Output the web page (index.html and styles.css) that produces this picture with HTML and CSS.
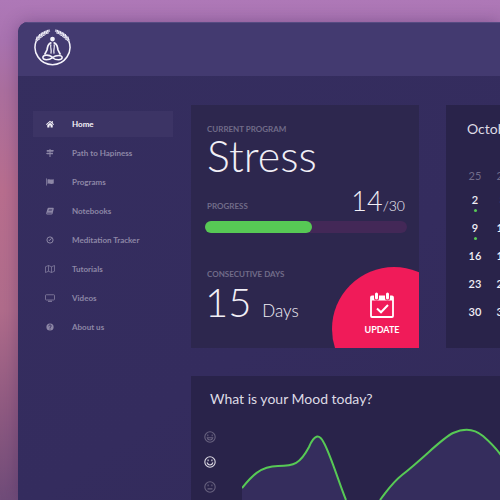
FILE: index.html
```html
<!DOCTYPE html>
<html lang="en">
<head>
<meta charset="utf-8">
<meta name="viewport" content="width=device-width, initial-scale=1">
<title>Home</title>
<link rel="stylesheet" href="styles.css">
</head>
<body>
<div class="app">
  <header class="topbar">
    <svg class="logo" viewBox="0 0 36 38" fill="none" stroke="#f4f2fa" aria-hidden="true">
      <path d="M2.200 11.500A17 17 0 1 0 33.800 11.500" stroke-width="1.500"/>
      <path d="M2 11.500C5 6 9 2.800 15.500 1.500M34 11.500C31 6 27 2.800 20.500 1.500" stroke-width="2.600" stroke="#b5b0cd"/>
      <path d="M2.300 10.500 3 7.500M4.500 8.800 5.500 5M6.700 7 8.200 3.500M9.300 5.400 10.800 2.200M12 4 13.500 1M33.700 10.500 33 7.500M31.500 8.800 30.500 5M29.300 7 27.800 3.500M26.700 5.400 25.200 2.200M24 4 22.500 1" stroke-width="1.100"/>
      <path d="M2.500 11.500 6 9.500M5 9 8.500 7.300M7.500 7 11 5.600M10.500 5 14.500 3.700M33.500 11.500 30 9.500M31 9 27.500 7.300M28.500 7 25 5.600M25.500 5 21.500 3.700" stroke-width="0.900"/>
      <circle cx="18" cy="9.800" r="2.300" fill="#f4f2fa" stroke="none"/>
      <path d="M17 13.300C13 14.300 13.500 17 12.600 20.500L10.300 25M19 13.300C23 14.300 22.500 17 23.400 20.500L25.700 25" stroke-width="1.700"/>
      <path d="M16.400 15C15.600 19 17.500 20 16.500 24M19.600 15C20.400 19 18.500 20 19.500 24" stroke-width="1.200"/>
      <path d="M18 27.300C13.500 24.300 8.500 25.300 8.600 27.800C8.800 30.600 14.500 30.600 18 27.800C21.500 25.200 27.200 25.200 27.400 27.800C27.500 30.600 21.500 30.800 18 28" stroke-width="1.500"/>
    </svg>
  </header>

  <div class="layout">
    <nav class="nav">
      <a class="nav-item active" href="#">
        <svg viewBox="0 0 16 16" fill="currentColor" aria-hidden="true"><path d="M8 1.500 0 8.500l1.200 1.300L8 4l6.800 5.800L16 8.500l-2.500-2.200V2h-2.200v2.400zM8 5.500 2.600 10v4.800h4.200V11h2.400v3.800h4.200V10z"/></svg>
        Home</a>
      <a class="nav-item" href="#">
        <svg viewBox="0 0 16 16" fill="currentColor" aria-hidden="true"><path d="M7 0h2v2h5l2 1.700-2 1.700H9v2h5v3.300H9V16H7v-5.300H2L0 9l2-1.600h5v-2H1.500V2H7z"/></svg>
        Path to Hapiness</a>
      <a class="nav-item" href="#">
        <svg viewBox="0 0 16 16" fill="currentColor" aria-hidden="true"><path d="M0 1h2v14H.5V2.500zM3 3c4-2 5 1.500 12.500-.5v8.500C9 13.500 7 9.500 3 11.800z"/></svg>
        Programs</a>
      <a class="nav-item" href="#">
        <svg viewBox="0 0 16 16" fill="currentColor" fill-rule="evenodd" aria-hidden="true"><path d="M5 1.500h9.500q1.500.5 1 2L13 13.500q-.5 1.500-2 1.500H2Q0 14.500.5 12L3 3.500Q3.500 1.500 5 1.500zM6 4.300l-.4 1.200h6.600l.4-1.200zM5.200 7l-.4 1.200h6.600l.4-1.200zM2.500 11.500l-.3 1.500h9l.4-1.500z"/></svg>
        Notebooks</a>
      <a class="nav-item" href="#">
        <svg viewBox="0 0 16 16" fill="none" stroke="currentColor" stroke-width="2" aria-hidden="true"><circle cx="8" cy="8" r="6.200"/><path d="M11 4.500 8 8.500H5.500"/></svg>
        Meditation Tracker</a>
      <a class="nav-item" href="#">
        <svg class="wide" viewBox="0 0 20 16" fill="none" stroke="currentColor" stroke-width="1.400" aria-hidden="true"><path d="M1 3.500 7 1l6 2.500L19 1v11.500L13 15l-6-2.500L1 15zM7 1v11.500M13 3.500V15"/></svg>
        Tutorials</a>
      <a class="nav-item" href="#">
        <svg class="wide" viewBox="0 0 20 16" fill="none" stroke="currentColor" stroke-width="1.500" aria-hidden="true"><rect x="1" y="1.500" width="18" height="10.500" rx="1.500"/><path d="M6 14.500h8" stroke-width="2"/></svg>
        Videos</a>
      <a class="nav-item" href="#">
        <svg viewBox="0 0 16 16" aria-hidden="true"><circle cx="8" cy="8" r="7.200" fill="currentColor"/><path d="M5.500 6.500C5.500 3 10.700 3.200 10.500 6.200 10.300 8 8 7.700 8 10M8 11v2" fill="none" stroke="#352d5e" stroke-width="2"/></svg>
        About us</a>
    </nav>

    <main class="panels">
      <section class="card program">
        <h2 class="label">CURRENT PROGRAM</h2>
        <p class="program-name">Stress</p>
        <div class="progress-head">
          <h2 class="label">PROGRESS</h2>
          <p class="count">14<span>/30</span></p>
        </div>
        <div class="bar" role="progressbar" aria-label="Progress" aria-valuemin="0" aria-valuemax="30" aria-valuenow="14"><div class="bar-fill"></div></div>
        <h2 class="label">CONSECUTIVE DAYS</h2>
        <p class="days">15 <span>Days</span></p>
        <button class="update" type="button">
          <svg viewBox="0 0 24 26" fill="none" stroke="#fff" aria-hidden="true">
            <rect x="1" y="4.500" width="22" height="20.500" rx="1" stroke-width="1.800"/>
            <path d="M1 4h22v4.500H1z" fill="#fff" stroke="none"/>
            <path d="M6.500 3v3M17.500 3v3" stroke="#f01b59" stroke-width="5" stroke-linecap="round"/>
            <path d="M6.500 2v4M17.500 2v4" stroke-width="3" stroke-linecap="round"/>
            <path d="m7 16.500 4 3.800 7-7.300" stroke-width="2"/>
          </svg>
          UPDATE
        </button>
      </section>

      <section class="card calendar">
        <h2 class="title">October</h2>
        <table>
          <tbody>
            <tr class="first"><td class="muted">25</td><td class="muted">26</td></tr>
            <tr><td class="marked">2</td><td>3</td></tr>
            <tr><td class="marked">9</td><td>10</td></tr>
            <tr><td>16</td><td>17</td></tr>
            <tr><td>23</td><td>24</td></tr>
            <tr><td>30</td><td>31</td></tr>
          </tbody>
        </table>
      </section>

      <section class="card mood">
        <h2 class="title">What is your Mood today?</h2>
        <div class="mood-body">
          <div class="faces">
            <button type="button" aria-label="Great"><svg viewBox="0 0 22 22"><circle cx="11" cy="11" r="9.500"/><path d="M7 6.500v3M15 6.500v3M6 12.500h10q-1 4-5 4t-5-4z"/></svg></button>
            <button type="button" aria-label="Good" class="selected"><svg viewBox="0 0 22 22"><circle cx="11" cy="11" r="9.500"/><path d="M7.500 6.500v3M14.500 6.500v3M5.500 12q1.500 4.500 5.500 4.500t5.500-4.500"/></svg></button>
            <button type="button" aria-label="Neutral"><svg viewBox="0 0 22 22"><circle cx="11" cy="11" r="9.500"/><path d="M7.500 6.500v3M14.500 6.500v3M6.500 14.500h9"/></svg></button>
          </div>
          <svg class="chart" viewBox="0 0 280 100" aria-hidden="true">
            <path class="area" d="M0 63C9 52 18 41 36 41C52 41 58 39 67 22C72 10 77 8 82 18C89 31 97 58 104 75V100H0zM138 75C148 62 150 58 160 50C184 31 199 14 211 8C224 2 234 5 241 11C249 18 257 26 262 35L280 65V100H138z"/>
            <path class="line" d="M0 63C9 52 18 41 36 41C52 41 58 39 67 22C72 10 77 8 82 18C89 31 97 58 104 75M138 75C148 62 150 58 160 50C184 31 199 14 211 8C224 2 234 5 241 11C249 18 257 26 262 35L280 65"/>
          </svg>
        </div>
      </section>
    </main>
  </div>
</div>
</body>
</html>
```
FILE: styles.css
```css
* { box-sizing: border-box; }

body {
  margin: 0;
  height: 100vh;
  overflow: hidden;
  display: flex;
  padding: 22px 0 0 18px;
  font-family: Lato, "Liberation Sans", sans-serif;
  color: #f1eff6;
  background: linear-gradient(180deg, #ae78b7 0%, #a973b0 8%, #ab6f9e 18%, #b86e8e 38%, #b06c8b 62%, #8f5a81 82%, #704c79 100%);
}

h2, p { margin: 0; }

.app {
  flex: 1;
  min-width: 0;
  overflow: hidden;
  border-top-left-radius: 10px;
  background: linear-gradient(145deg, #352e5f, #342c5e 60%, #322b59);
  box-shadow: 0 0 16px rgba(60, 35, 90, 0.35);
}

.topbar {
  height: 54px;
  padding: 6px 16px;
  background: #433a70;
  border-top: 1px solid #574b82;
}

.logo { display: block; width: 37px; height: 39px; }

.layout {
  display: grid;
  grid-template-columns: 140px minmax(0, 1fr);
  gap: 18px;
  padding: 29px 0 0 15px;
}

.nav {
  display: flex;
  flex-direction: column;
  gap: 3px;
  padding-top: 6px;
}

.nav-item {
  display: flex;
  align-items: center;
  height: 26px;
  padding-left: 12px;
  font-size: 8px;
  font-weight: 700;
  color: #8d87a6;
  text-decoration: none;
}

.nav-item svg { width: 8px; height: 8px; margin: 0 18px 0 1px; }
.nav-item svg.wide { width: 10px; margin: 0 17px 0 0; }
.nav-item.active { color: #f4f2f8; background: #3c3465; }

.panels {
  display: grid;
  grid-template-columns: 228px minmax(0, 1fr);
  gap: 28px 27px;
}

.card { background: #2d274e; overflow: hidden; }

.label {
  font-size: 8px;
  line-height: 10px;
  font-weight: 700;
  color: #716c89;
}

.title {
  font-size: 14px;
  line-height: 20px;
  font-weight: 400;
  color: #dedbe5;
}

.program {
  position: relative;
  height: 243px;
  padding: 19px 12px 0 14px;
}

.program .label { padding-left: 2px; }

.program-name {
  padding-left: 2px;
  font-size: 43px;
  line-height: 44px;
  font-weight: 300;
}

.progress-head {
  display: flex;
  justify-content: space-between;
  align-items: flex-end;
  padding: 9px 2px 0 0;
}

.progress-head .label { padding-bottom: 4px; }

.count { font-size: 27px; line-height: 28px; font-weight: 300; }
.count span { font-size: 14px; line-height: 14px; }

.bar {
  height: 12px;
  margin: 6px 0 36px;
  border-radius: 6px;
  background: #432857;
}

.bar-fill {
  width: 53%;
  height: 100%;
  border-radius: 6px;
  background: #57c955;
}

.days { font-size: 40px; line-height: 46px; font-weight: 300; }
.days span { font-size: 17px; line-height: 17px; }

.update {
  position: absolute;
  left: 141px;
  top: 162px;
  width: 124px;
  height: 124px;
  display: flex;
  flex-direction: column;
  align-items: center;
  gap: 6px;
  padding: 25px 24px 0 0;
  border: 0;
  border-radius: 50%;
  background: #f01b59;
  color: #fff;
  font: 700 9px/12px Lato, "Liberation Sans", sans-serif;
}

.update svg { width: 24px; height: 26px; }

.calendar { padding: 14px 0 0 21px; background: #29234a; }

.calendar table {
  width: 56px;
  margin: 27px 0 0 -6px;
  border-collapse: collapse;
  table-layout: fixed;
}

.calendar td {
  position: relative;
  width: 28px;
  height: 28px;
  padding: 0;
  font-size: 11px;
  font-weight: 600;
  text-align: center;
}

.calendar .first td { height: 19px; }
.calendar .muted { font-weight: 400; color: #716c89; }

.marked::after {
  content: "";
  position: absolute;
  left: 13px;
  bottom: 1px;
  width: 3px;
  height: 3px;
  border-radius: 50%;
  background: #57c955;
}

.mood {
  grid-column: 1 / -1;
  min-height: 243px;
  padding: 13px 0 0 13px;
  background: #29234a;
}

.mood .title { padding-left: 6px; }

.mood-body {
  display: grid;
  grid-template-columns: 12px minmax(0, 1fr);
  gap: 26px;
  padding-top: 16px;
}

.faces { display: flex; flex-direction: column; gap: 13px; padding-top: 6px; }

.faces button {
  display: block;
  width: 12px;
  height: 12px;
  padding: 0;
  border: 0;
  background: none;
  color: #68627f;
}

.faces .selected { color: #dedbe5; }

.faces svg {
  display: block;
  width: 12px;
  height: 12px;
  fill: none;
  stroke: currentColor;
  stroke-width: 2;
}

.chart { display: block; width: 280px; height: 100px; }
.area { fill: #352d5d; }
.line { fill: none; stroke: #57c955; stroke-width: 2; }
```
